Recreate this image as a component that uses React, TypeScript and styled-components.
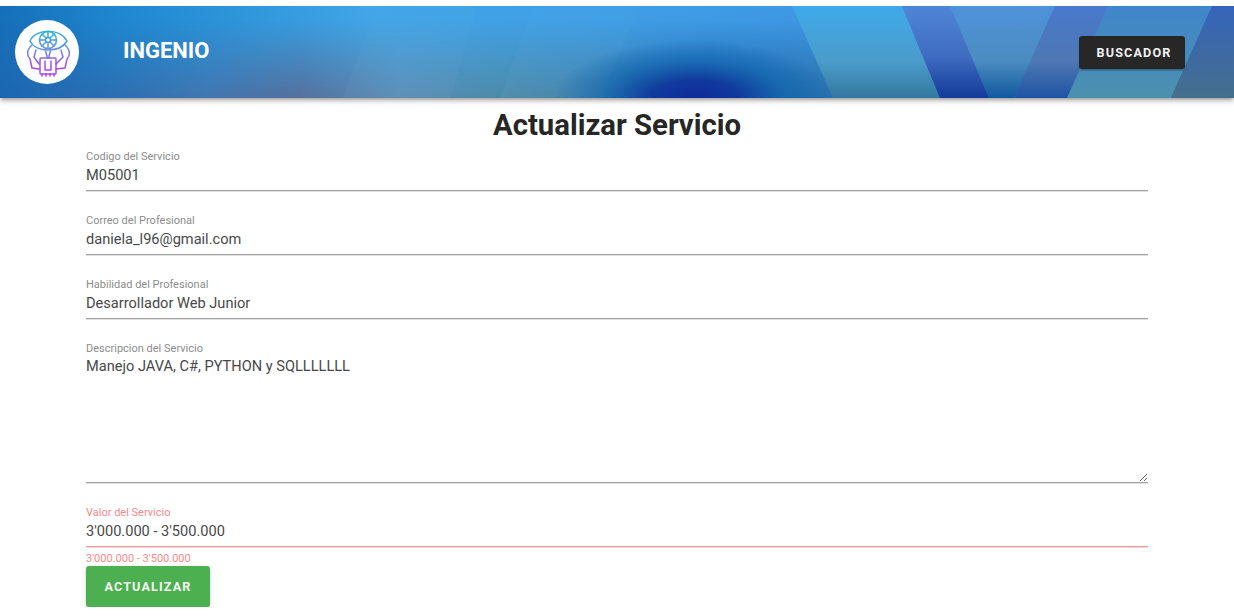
import React from 'react';
import styled, { createGlobalStyle } from 'styled-components';

const GlobalStyle = createGlobalStyle`
  html, body {
    margin: 0;
    padding: 0;
    background: #fff;
    font-family: Roboto, "Liberation Sans", sans-serif;
  }
  * {
    box-sizing: border-box;
  }
`;

const AppBar = styled.header`
  position: relative;
  margin-top: 6px;
  height: 92px;
  display: flex;
  align-items: center;
  justify-content: space-between;
  padding: 0 49px 0 15px;
  overflow: hidden;
  background: #2f8fd8;
  box-shadow: 0 2px 4px -1px rgba(0, 0, 0, 0.35), 0 4px 5px 0 rgba(0, 0, 0, 0.14);
`;

const BarArt = styled.svg`
  position: absolute;
  inset: 0;
  width: 100%;
  height: 100%;
  filter: blur(0.7px);
`;

const Brand = styled.div`
  position: relative;
  display: flex;
  align-items: center;
  gap: 44px;
`;

const LogoCircle = styled.div`
  width: 64px;
  height: 64px;
  border-radius: 50%;
  background: #fff;
  display: flex;
  align-items: center;
  justify-content: center;
  svg {
    filter: blur(0.35px);
  }
`;

const BrandName = styled.span`
  color: #fff;
  font-size: 22px;
  font-weight: 700;
  margin-bottom: 3px;
`;

const SearchButton = styled.button`
  position: relative;
  width: 106px;
  height: 33px;
  margin-top: 1px;
  padding: 0 0 0 4px;
  border: none;
  border-radius: 3px;
  background: #272727;
  color: #f2f2f2;
  font-family: inherit;
  font-size: 12.6px;
  font-weight: 700;
  letter-spacing: 1.15px;
  box-shadow: 0 3px 1px -2px rgba(0, 0, 0, 0.2), 0 2px 2px 0 rgba(0, 0, 0, 0.14);
`;

const Main = styled.main`
  padding: 0 86px;
`;

const Title = styled.h1`
  margin: 11px 0 0;
  font-size: 29.3px;
  line-height: 32px;
  font-weight: 700;
  text-align: center;
  color: #262626;
`;

const Form = styled.form`
  display: flex;
  flex-direction: column;
  margin-top: 9px;
`;

const Field = styled.div`
  display: flex;
  flex-direction: column;
  margin-bottom: 23px;
  &:last-of-type {
    margin-bottom: 0;
  }
`;

const Label = styled.label<{ $error?: boolean }>`
  padding-top: 1px;
  font-size: 11px;
  line-height: 12px;
  color: ${(p) => (p.$error ? '#f58a8a' : '#8c8c8c')};
`;

const TextInput = styled.input<{ $error?: boolean }>`
  width: 100%;
  height: 28px;
  border: none;
  border-bottom: 1px solid ${(p) => (p.$error ? '#e99a9a' : '#a0a0a0')};
  box-shadow: 0 1px 0 ${(p) => (p.$error ? '#f6d5d5' : '#e2e2e2')};
  padding: 0 0 3px;
  outline: none;
  background: transparent;
  font-family: inherit;
  font-size: 14.6px;
  color: #484848;
`;

const TextArea = styled.textarea`
  display: block;
  width: 100%;
  height: 127px;
  border: none;
  border-bottom: 1px solid #a0a0a0;
  box-shadow: 0 1px 0 #e2e2e2;
  padding: 0;
  margin-top: 1px;
  outline: none;
  background: transparent;
  font-family: inherit;
  font-size: 14.6px;
  line-height: 20px;
  color: #484848;
`;

const HelperText = styled.div`
  margin-top: 5px;
  font-size: 11px;
  line-height: 13px;
  color: #f58a8a;
`;

const SubmitButton = styled.button`
  align-self: flex-start;
  width: 124px;
  height: 41px;
  margin-top: 1px;
  border: none;
  border-radius: 3px;
  background: #4caf50;
  color: #f4f8f4;
  font-family: inherit;
  font-size: 12.6px;
  font-weight: 700;
  letter-spacing: 1.15px;
  box-shadow: 0 3px 1px -2px rgba(0, 0, 0, 0.2), 0 2px 2px 0 rgba(0, 0, 0, 0.14), 0 1px 5px 0 rgba(0, 0, 0, 0.12);
`;

const HeaderArt = () => (
  <BarArt viewBox="0 0 1234 92" preserveAspectRatio="none" aria-hidden="true">
    <defs>
      <linearGradient id="base" x1="0" x2="1" y1="0" y2="0">
        <stop offset="0" stopColor="#176fb9" />
        <stop offset="0.1" stopColor="#1f88d1" />
        <stop offset="0.3" stopColor="#41a5e6" />
        <stop offset="0.5" stopColor="#3f9ee6" />
        <stop offset="0.65" stopColor="#3e97e2" />
        <stop offset="1" stopColor="#3d6fc4" />
      </linearGradient>
      <linearGradient id="floor" gradientUnits="userSpaceOnUse" x1="0" x2="833" y1="0" y2="0">
        <stop offset="0" stopColor="#1d66b0" />
        <stop offset="0.12" stopColor="#2a6db0" />
        <stop offset="0.25" stopColor="#4276b0" />
        <stop offset="0.36" stopColor="#56709c" />
        <stop offset="0.48" stopColor="#5a8cb4" />
        <stop offset="0.6" stopColor="#4d8aa8" />
        <stop offset="0.72" stopColor="#3f7fa8" />
        <stop offset="0.85" stopColor="#1a64aa" />
        <stop offset="1" stopColor="#2a70a8" />
      </linearGradient>
      <linearGradient id="floorFade" x1="0" x2="0" y1="0" y2="1">
        <stop offset="0.15" stopColor="#fff" stopOpacity="0" />
        <stop offset="1" stopColor="#fff" stopOpacity="1" />
      </linearGradient>
      <mask id="floorMask">
        <rect width="1234" height="92" fill="url(#floorFade)" />
      </mask>
      <linearGradient id="streak" x1="0" x2="0" y1="0" y2="1">
        <stop offset="0" stopColor="#fff" stopOpacity="0.01" />
        <stop offset="1" stopColor="#fff" stopOpacity="0.03" />
      </linearGradient>
      <radialGradient id="pool" cx="0.5" cy="0.5" r="0.5">
        <stop offset="0" stopColor="#0f2a98" />
        <stop offset="0.32" stopColor="#10389c" stopOpacity="0.95" />
        <stop offset="0.65" stopColor="#1064ae" stopOpacity="0.65" />
        <stop offset="1" stopColor="#1064ae" stopOpacity="0" />
      </radialGradient>
      <linearGradient id="bandDark" x1="0" x2="0" y1="0" y2="1">
        <stop offset="0" stopColor="#4f86d6" />
        <stop offset="0.55" stopColor="#3f6cc0" />
        <stop offset="1" stopColor="#123a98" />
      </linearGradient>
      <linearGradient id="bandMid" x1="0" x2="0" y1="0" y2="1">
        <stop offset="0" stopColor="#4f92da" />
        <stop offset="0.6" stopColor="#4b8cc0" />
        <stop offset="1" stopColor="#10589e" />
      </linearGradient>
      <linearGradient id="bandRight" x1="0" x2="0" y1="0" y2="1">
        <stop offset="0" stopColor="#4a78cc" />
        <stop offset="0.6" stopColor="#4d78b4" />
        <stop offset="1" stopColor="#1e54a4" />
      </linearGradient>
      <linearGradient id="bandTeal" x1="0" x2="0" y1="0" y2="1">
        <stop offset="0" stopColor="#3f86cc" />
        <stop offset="1" stopColor="#4c90ae" />
      </linearGradient>
      <linearGradient id="bandEdge" x1="0" x2="0" y1="0" y2="1">
        <stop offset="0" stopColor="#3664bc" />
        <stop offset="1" stopColor="#456f8c" />
      </linearGradient>
      <linearGradient id="bandSky" x1="0" x2="0" y1="0" y2="1">
        <stop offset="0" stopColor="#3fa9ea" />
        <stop offset="0.6" stopColor="#4a9ccb" />
        <stop offset="1" stopColor="#34789f" />
      </linearGradient>
    </defs>
    <rect width="1234" height="92" fill="url(#base)" />
    <rect width="1234" height="92" fill="url(#floor)" mask="url(#floorMask)" />
    <polygon points="377,0 477,0 450,92 343,92" fill="url(#streak)" />
    <polygon points="533,0 640,0 600,92 500,92" fill="url(#streak)" />
    <ellipse cx="695" cy="92" rx="140" ry="58" fill="url(#pool)" />
    <polygon points="792,0 902,0 940,92 833,92" fill="url(#bandSky)" />
    <polygon points="902,0 950,0 989,92 940,92" fill="url(#bandDark)" />
    <polygon points="950,0 1055,0 1014,92 989,92" fill="url(#bandMid)" />
    <polygon points="1055,0 1108,0 1067,92 1014,92" fill="url(#bandRight)" />
    <polygon points="1108,0 1212,0 1171,92 1067,92" fill="url(#bandTeal)" />
    <polygon points="1212,0 1234,0 1234,92 1171,92" fill="url(#bandEdge)" />
  </BarArt>
);

const Logo = () => (
  <svg width="50" height="50" viewBox="0 0 50 50" fill="none" aria-hidden="true">
    <defs>
      <linearGradient id="logoInk" gradientUnits="userSpaceOnUse" x1="0" x2="0" y1="3" y2="48">
        <stop offset="0" stopColor="#22b4d0" />
        <stop offset="0.45" stopColor="#6a8ce8" />
        <stop offset="0.8" stopColor="#a548f2" />
      </linearGradient>
    </defs>
    <g stroke="url(#logoInk)" strokeWidth="1.5" strokeLinejoin="round" strokeLinecap="round">
      <path d="M8 14 C14 1 38 1 45 14 C38 26 14 26 8 14 Z" />
      <circle cx="26" cy="13" r="8.5" />
      <circle cx="26" cy="13" r="2.5" />
      <path d="M26 5v5M26 16v5M18 13h5M29 13h5M20 7l4 4M32 7l-4 4M20 19l4-4M32 19l-4-4" />
      <path d="M10 18 C4 23 5 29 8 32 L10 41 L17 42" />
      <path d="M43 18 C49 23 48 29 45 32 L43 41 L34 42" />
      <path d="M14 23 L12 30 L17 37" />
      <path d="M39 23 L41 30 L34 37" />
      <path d="M23.5 24 L25 29 L25 31 M28.5 24 L27 29 L27 31" />
      <rect x="18" y="31" width="16" height="16" rx="1" />
      <path d="M23 34 V43 H29 V34" />
      <path d="M20 47v2M24 47v2M28 47v2M32 47v2" />
    </g>
  </svg>
);

const App: React.FC = () => {
  return (
    <>
      <GlobalStyle />
      <AppBar>
        <HeaderArt />
        <Brand>
          <LogoCircle>
            <Logo />
          </LogoCircle>
          <BrandName>INGENIO</BrandName>
        </Brand>
        <SearchButton type="button">BUSCADOR</SearchButton>
      </AppBar>
      <Main>
        <Title>Actualizar Servicio</Title>
        <Form>
          <Field>
            <Label>Codigo del Servicio</Label>
            <TextInput readOnly value="M05001" />
          </Field>
          <Field>
            <Label>Correo del Profesional</Label>
            <TextInput readOnly value="daniela_l96@gmail.com" />
          </Field>
          <Field>
            <Label>Habilidad del Profesional</Label>
            <TextInput readOnly value="Desarrollador Web Junior" />
          </Field>
          <Field>
            <Label>Descripcion del Servicio</Label>
            <TextArea readOnly value="Manejo JAVA, C#, PYTHON y SQLLLLLLL" />
          </Field>
          <Field>
            <Label $error>Valor del Servicio</Label>
            <TextInput $error readOnly value="3'000.000 - 3'500.000" />
            <HelperText>3'000.000 - 3'500.000</HelperText>
          </Field>
          <SubmitButton type="button">ACTUALIZAR</SubmitButton>
        </Form>
      </Main>
    </>
  );
};

export default App;
